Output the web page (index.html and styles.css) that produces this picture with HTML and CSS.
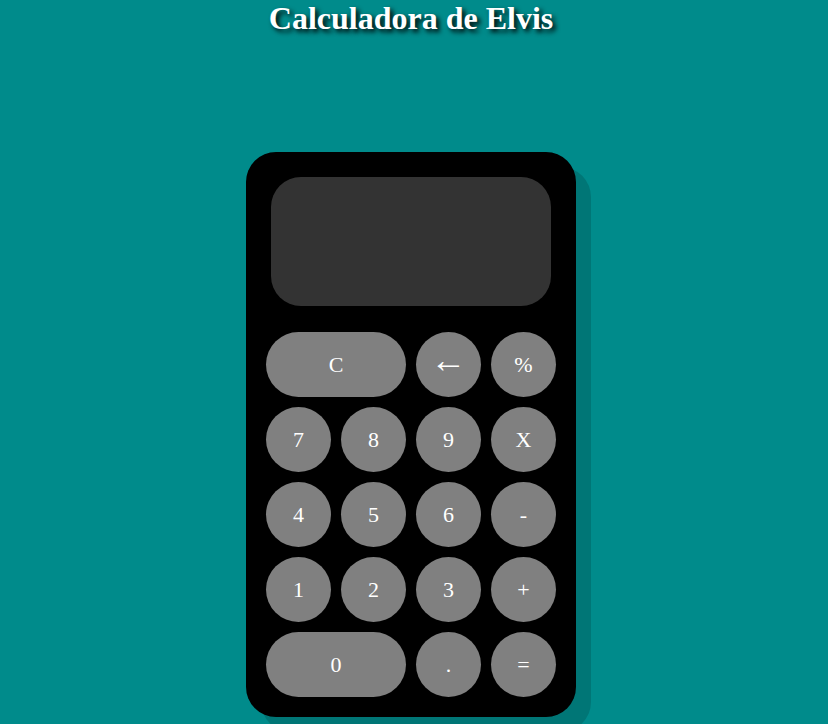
FILE: index.html
```
<!DOCTYPE html>
<html lang="es">
<head>
<meta charset="utf-8">
<title>Calculadora de Elvis</title>
<link rel="stylesheet" href="styles.css">
</head>
<body>
<h1 class="title">Calculadora de Elvis</h1>
<div class="calc">
  <div class="display"></div>
  <div class="keys">
    <button class="key wide">C</button>
    <button class="key"><span class="arrow">&larr;</span></button>
    <button class="key">%</button>
    <button class="key">7</button>
    <button class="key">8</button>
    <button class="key">9</button>
    <button class="key">X</button>
    <button class="key">4</button>
    <button class="key">5</button>
    <button class="key">6</button>
    <button class="key">-</button>
    <button class="key">1</button>
    <button class="key">2</button>
    <button class="key">3</button>
    <button class="key">+</button>
    <button class="key wide">0</button>
    <button class="key">.</button>
    <button class="key">=</button>
  </div>
</div>
</body>
</html>
```
FILE: styles.css
```
html, body {
  margin: 0;
  padding: 0;
}
body {
  background: #008b8b;
  font-family: "Liberation Serif", "Times New Roman", serif;
  display: flex;
  flex-direction: column;
  align-items: center;
  min-height: 724px;
  padding-right: 6px;
}
.title {
  margin: 0;
  font-size: 32px;
  font-weight: bold;
  color: #fff;
  text-shadow: 3px 3px 5px #000;
  line-height: 37px;
}
.calc {
  margin-top: 115px;
  width: 330px;
  box-sizing: border-box;
  padding: 25px 20px 20px;
  background: #000;
  border-radius: 30px;
  box-shadow: 15px 15px 0 rgba(0, 0, 0, 0.15);
}
.display {
  width: 280px;
  height: 129px;
  margin: 0 auto 26px;
  background: #333;
  border-radius: 30px;
}
.keys {
  display: grid;
  grid-template-columns: repeat(4, 65px);
  grid-auto-rows: 65px;
  gap: 10px;
}
.key {
  border: none;
  padding: 0;
  margin: 0;
  background: #808080;
  color: #fff;
  border-radius: 33px;
  font-family: "Liberation Serif", "Times New Roman", serif;
  font-size: 22px;
  display: flex;
  align-items: center;
  justify-content: center;
}
.key.wide {
  grid-column: span 2;
}
.arrow {
  font-size: 36px;
  line-height: 1;
  padding-bottom: 10px;
}
```
